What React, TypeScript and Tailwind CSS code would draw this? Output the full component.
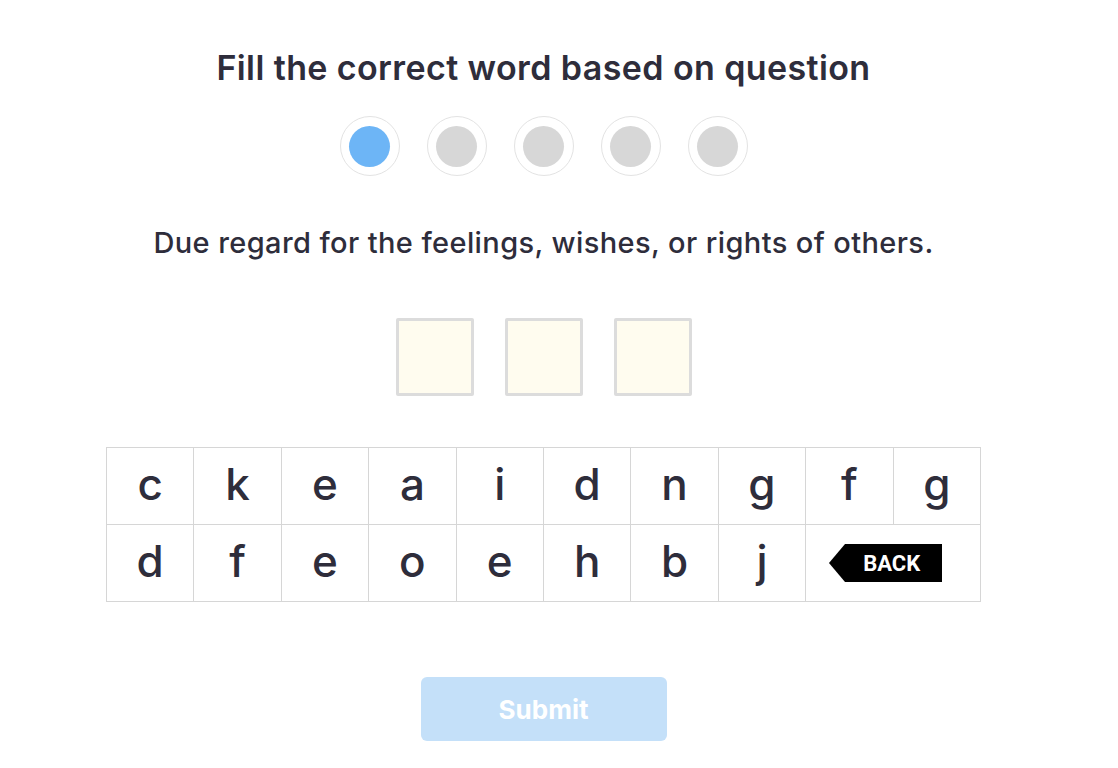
import React from 'react';

const rowOne = ['c', 'k', 'e', 'a', 'i', 'd', 'n', 'g', 'f', 'g'];
const rowTwo = ['d', 'f', 'e', 'o', 'e', 'h', 'b', 'j'];

const Key = ({ letter }: { letter: string }) => (
    <button className="flex h-[77px] items-center justify-center border-r border-b border-[#d6d6d6] bg-white text-[44px] font-medium leading-none text-[#2e2d3b]">
        <span className="-mt-1">{letter}</span>
    </button>
);

export default function App() {
    return (
        <div className="min-h-[768px] w-full bg-white font-['Inter','Noto_Sans',sans-serif] text-[#2e2d3b]">
            <div className="flex w-[1087px] flex-col items-center pt-[45px]">
                <h1 className="text-[34px] font-semibold leading-[46px] tracking-[0.4px]">
                    Fill the correct word based on question
                </h1>

                {/* progress */}
                <div className="mt-[25px] flex gap-[27px]">
                    {[0, 1, 2, 3, 4].map((i) => (
                        <div
                            key={i}
                            className="flex h-[60px] w-[60px] items-center justify-center rounded-full border border-[#e3e3e3]"
                        >
                            <div className={`h-[41px] w-[41px] rounded-full ${i === 0 ? 'bg-[#6db5f6]' : 'bg-[#d7d7d7]'}`} />
                        </div>
                    ))}
                </div>

                <p className="mt-[48px] text-[29px] font-medium leading-[38px] tracking-[0.4px]">
                    Due regard for the feelings, wishes, or rights of others.
                </p>

                {/* answer slots */}
                <div className="mt-[56px] flex gap-[31px]">
                    {[0, 1, 2].map((i) => (
                        <div key={i} className="h-[78px] w-[78px] rounded-[2px] border-[3px] border-[#dcdcdc] bg-[#fffcef]" />
                    ))}
                </div>

                {/* keyboard */}
                <div className="mt-[51px] grid w-[875px] grid-cols-10 border-t border-l border-[#d6d6d6]">
                    {rowOne.map((l, i) => (
                        <Key key={'a' + i} letter={l} />
                    ))}
                    {rowTwo.map((l, i) => (
                        <Key key={'b' + i} letter={l} />
                    ))}
                    <div className="col-span-2 flex h-[77px] items-center justify-start border-r border-b border-[#d6d6d6] pl-[23px]">
                        <button className="flex items-center">
                            <svg width="16" height="38" viewBox="0 0 16 38" className="block">
                                <polygon points="16,0 16,38 0,19" fill="#000" />
                            </svg>
                            <span className="flex h-[38px] w-[97px] items-center justify-center bg-black pr-[4px] font-['Roboto',sans-serif] text-[22px] font-bold text-white">
                                BACK
                            </span>
                        </button>
                    </div>
                </div>

                <button className="mt-[75px] h-[64px] w-[246px] rounded-[6px] bg-[#c4e0f9] text-[26px] font-bold text-white">
                    Submit
                </button>
            </div>
        </div>
    );
}
